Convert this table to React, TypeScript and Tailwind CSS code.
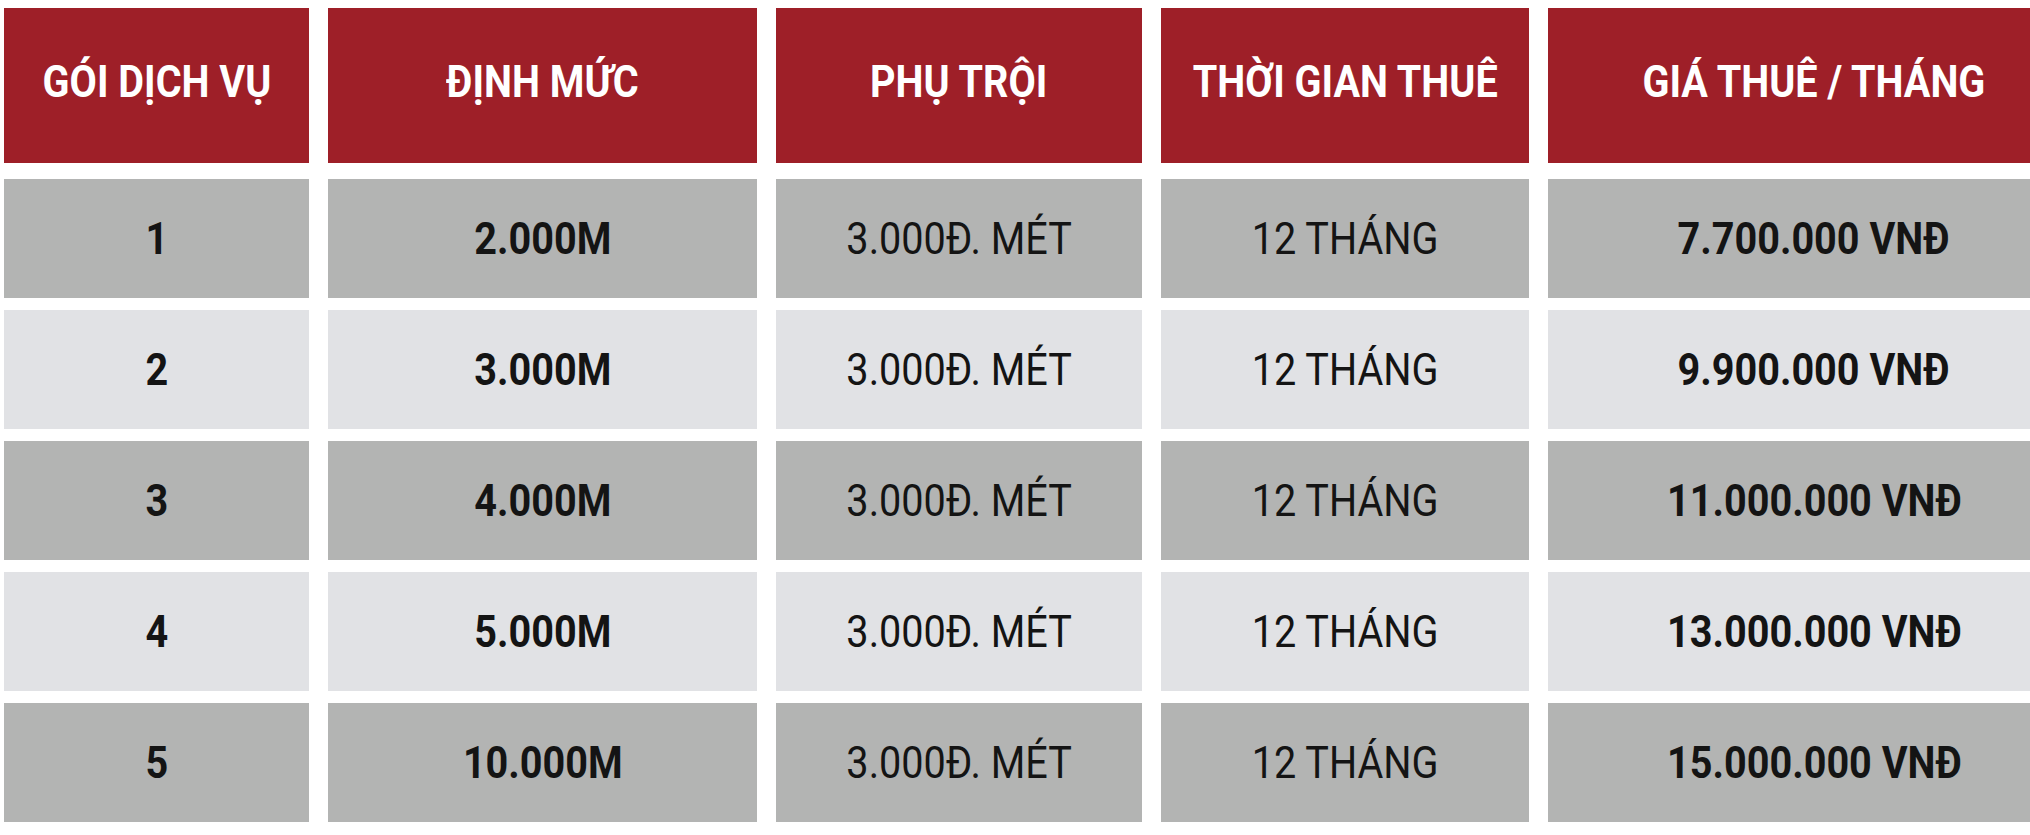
const headers = ["GÓI DỊCH VỤ", "ĐỊNH MỨC", "PHỤ TRỘI", "THỜI GIAN THUÊ", "GIÁ THUÊ / THÁNG"];

const rows = [
  { id: "1", quota: "2.000M", price: "7.700.000 VNĐ" },
  { id: "2", quota: "3.000M", price: "9.900.000 VNĐ" },
  { id: "3", quota: "4.000M", price: "11.000.000 VNĐ" },
  { id: "4", quota: "5.000M", price: "13.000.000 VNĐ" },
  { id: "5", quota: "10.000M", price: "15.000.000 VNĐ" },
];

function Txt({ children, bold }: { children: React.ReactNode; bold?: boolean }) {
  return (
    <span
      className={
        "inline-block scale-x-[0.88] whitespace-nowrap text-[45px] leading-none " +
        (bold ? "font-bold" : "font-normal")
      }
    >
      {children}
    </span>
  );
}

export default function App() {
  return (
    <div className="w-full h-[835px] overflow-hidden bg-white font-['Roboto',sans-serif]">
      <div className="grid w-[2080px] grid-cols-[305px_429px_366px_368px_532px] gap-x-[19px] gap-y-[12px] pl-[4px] pt-[8px]">
        {headers.map((h) => (
          <div
            key={h}
            className="mb-[4px] flex h-[155px] items-center justify-center bg-[#9e1f28] pb-[8px] text-white"
          >
            <Txt bold>{h}</Txt>
          </div>
        ))}
        {rows.map((r, i) => {
          const bg = i % 2 === 0 ? "bg-[#b3b4b3]" : "bg-[#e1e2e5]";
          const cells = [
            { t: r.id, bold: true },
            { t: r.quota, bold: true },
            { t: "3.000Đ. MÉT", bold: false },
            { t: "12 THÁNG", bold: false },
            { t: r.price, bold: true },
          ];
          return cells.map((c, j) => (
            <div
              key={r.id + "-" + j}
              className={"flex h-[119px] items-center justify-center text-[#141414] " + bg}
            >
              <Txt bold={c.bold}>{c.t}</Txt>
            </div>
          ));
        })}
      </div>
    </div>
  );
}
